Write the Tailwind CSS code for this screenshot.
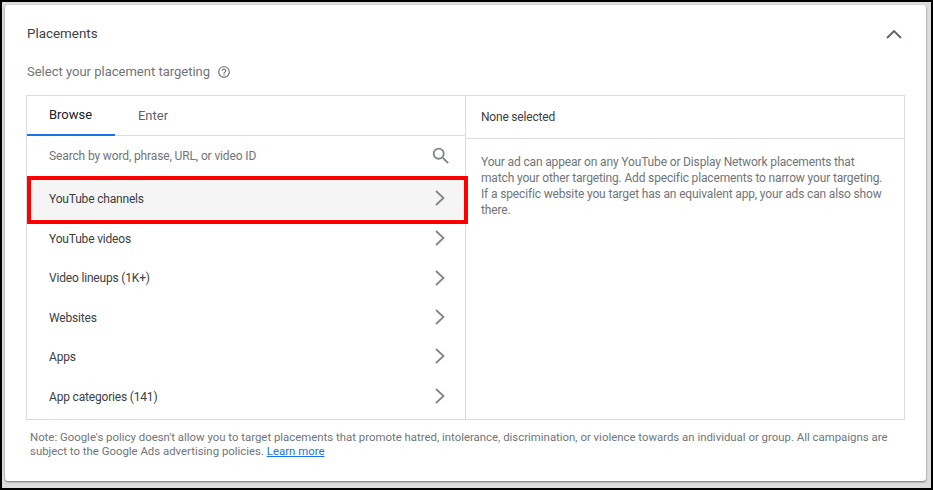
<!DOCTYPE html>
<html lang="en">
<head>
    <meta charset="UTF-8">
    <title>Placements</title>
    <script src="https://cdn.jsdelivr.net/npm/@tailwindcss/browser@4"></script>
</head>
<body class="bg-white">
    <div class="w-[933px] h-[490px] overflow-hidden border-2 border-black bg-[#dcdcdc] pt-[3px] pl-[3px] pr-[5px] pb-[7px] font-['Roboto',sans-serif]">
        <div class="h-[476px] w-[921px] bg-white rounded-[3px] shadow-[0_1px_2px_rgba(0,0,0,0.5)] pl-[21px] pr-[21px]">
            <!-- header -->
            <div class="flex items-center justify-between h-[56px] pt-[1px]">
                <h2 class="ml-[1px] mt-[2px] text-[13.4px] text-[#3c4043]">Placements</h2>
                <svg class="w-[18px] h-[18px] mr-[2px]" viewBox="0 0 18 18" fill="none" stroke="#5f6368" stroke-width="1.9"><path d="M2 13 L9 6 L16 13"/></svg>
            </div>
            <div class="flex items-center gap-[7px] h-[22px] ml-[1px] text-[13px] text-[#70757a]">
                <span>Select your placement targeting</span>
                <svg class="w-[14px] h-[14px]" viewBox="0 0 24 24" fill="#70757a"><path d="M11 18h2v-2h-2v2zm1-16C6.48 2 2 6.48 2 12s4.48 10 10 10 10-4.48 10-10S17.52 2 12 2zm0 18c-4.41 0-8-3.59-8-8s3.59-8 8-8 8 3.59 8 8-3.59 8-8 8zm0-14c-2.21 0-4 1.79-4 4h2c0-1.1.9-2 2-2s2 .9 2 2c0 2-3 1.75-3 5h2c0-2.25 3-2.5 3-5 0-2.21-1.79-4-4-4z"/></svg>
            </div>
            <!-- panel -->
            <div class="flex h-[325px] w-[879px] mt-[12px] border border-[#dadce0]">
                <div class="relative w-[439px] border-r border-[#dadce0]">
                    <div class="flex h-[40px] border-b border-[#dadce0] text-[13px]">
                        <div class="w-[88px] h-[40px] flex items-center justify-center border-b-2 border-[#1a73e8] text-[#202124] pr-[1px]">Browse</div>
                        <div class="w-[76px] flex items-center justify-center text-[#5f6368]">Enter</div>
                    </div>
                    <div class="flex items-center justify-between h-[40px] pl-[22px] pr-[13px] text-[12px] tracking-[-0.13px] text-[#70757a]">
                        <span>Search by word, phrase, URL, or video ID</span>
                        <svg class="w-[22px] h-[22px]" viewBox="0 0 24 24" fill="#80868b"><path d="M15.5 14h-.79l-.28-.27A6.47 6.47 0 0 0 16 9.5 6.5 6.5 0 1 0 9.5 16c1.61 0 3.09-.59 4.23-1.57l.27.28v.79l5 4.99L20.49 19l-4.99-5zm-6 0C7.01 14 5 11.99 5 9.5S7.01 5 9.5 5 14 7.01 14 9.5 11.99 14 9.5 14z"/></svg>
                    </div>
                    <div class="flex items-center justify-between h-[43px] pt-[3px] pl-[22px] pr-[18px] bg-[#f5f5f5] text-[12px] tracking-[-0.18px] text-[#3c4043]">
                        <span>YouTube channels</span>
                        <svg class="w-[14px] h-[18px] mt-[-2px]" viewBox="0 0 14 18" fill="none" stroke="#80868b" stroke-width="1.8"><path d="M3 2 L10.5 9 L3 16"/></svg>
                    </div>
                    <div class="flex items-center justify-between h-[39px] pl-[22px] pr-[18px] text-[12px] tracking-[-0.18px] text-[#3c4043]">
                        <span>YouTube videos</span>
                        <svg class="w-[14px] h-[18px] mt-[-1px]" viewBox="0 0 14 18" fill="none" stroke="#80868b" stroke-width="1.8"><path d="M3 2 L10.5 9 L3 16"/></svg>
                    </div>
                    <div class="flex items-center justify-between h-[39px] pl-[22px] pr-[18px] text-[12px] tracking-[-0.18px] text-[#3c4043]">
                        <span>Video lineups (1K+)</span>
                        <svg class="w-[14px] h-[18px]" viewBox="0 0 14 18" fill="none" stroke="#80868b" stroke-width="1.8"><path d="M3 2 L10.5 9 L3 16"/></svg>
                    </div>
                    <div class="flex items-center justify-between h-[40px] pt-[1px] pl-[22px] pr-[18px] text-[12px] tracking-[-0.18px] text-[#3c4043]">
                        <span>Websites</span>
                        <svg class="w-[14px] h-[18px] mt-[-1px]" viewBox="0 0 14 18" fill="none" stroke="#80868b" stroke-width="1.8"><path d="M3 2 L10.5 9 L3 16"/></svg>
                    </div>
                    <div class="flex items-center justify-between h-[39px] pl-[22px] pr-[18px] text-[12px] tracking-[-0.18px] text-[#3c4043]">
                        <span>Apps</span>
                        <svg class="w-[14px] h-[18px] mt-[-1px]" viewBox="0 0 14 18" fill="none" stroke="#80868b" stroke-width="1.8"><path d="M3 2 L10.5 9 L3 16"/></svg>
                    </div>
                    <div class="flex items-center justify-between h-[40px] pt-[1px] pl-[22px] pr-[18px] text-[12px] tracking-[-0.18px] text-[#3c4043]">
                        <span>App categories (141)</span>
                        <svg class="w-[14px] h-[18px] mt-[-1px]" viewBox="0 0 14 18" fill="none" stroke="#80868b" stroke-width="1.8"><path d="M3 2 L10.5 9 L3 16"/></svg>
                    </div>
                    <!-- red highlight drawn over the row -->
                    <div class="absolute left-[0px] top-[80px] w-[441px] h-[48px] border-[4px] border-[#ff0000]"></div>
                </div>
                <div class="flex-1">
                    <div class="h-[43px] flex items-center pl-[15px] border-b border-[#dadce0] text-[12px] tracking-[-0.2px] text-[#3c4043]">None selected</div>
                    <p class="pt-[15px] pl-[15px] pr-[14px] text-[12px] tracking-[-0.15px] leading-[16px] text-[#70757a]">Your ad can appear on any YouTube or Display Network placements that match your other targeting. Add specific placements to narrow your targeting. If a specific website you target has an equivalent app, your ads can also show there.</p>
                </div>
            </div>
            <p class="mt-[10px] pl-[4px] w-[879px] text-[11.4px] leading-[14px] text-[#70757a]">Note: Google's policy doesn't allow you to target placements that promote hatred, intolerance, discrimination, or violence towards an individual or group. All campaigns are subject to the Google Ads advertising policies. <a class="text-[#1a73e8] underline">Learn more</a></p>
        </div>
    </div>
</body>
</html>
